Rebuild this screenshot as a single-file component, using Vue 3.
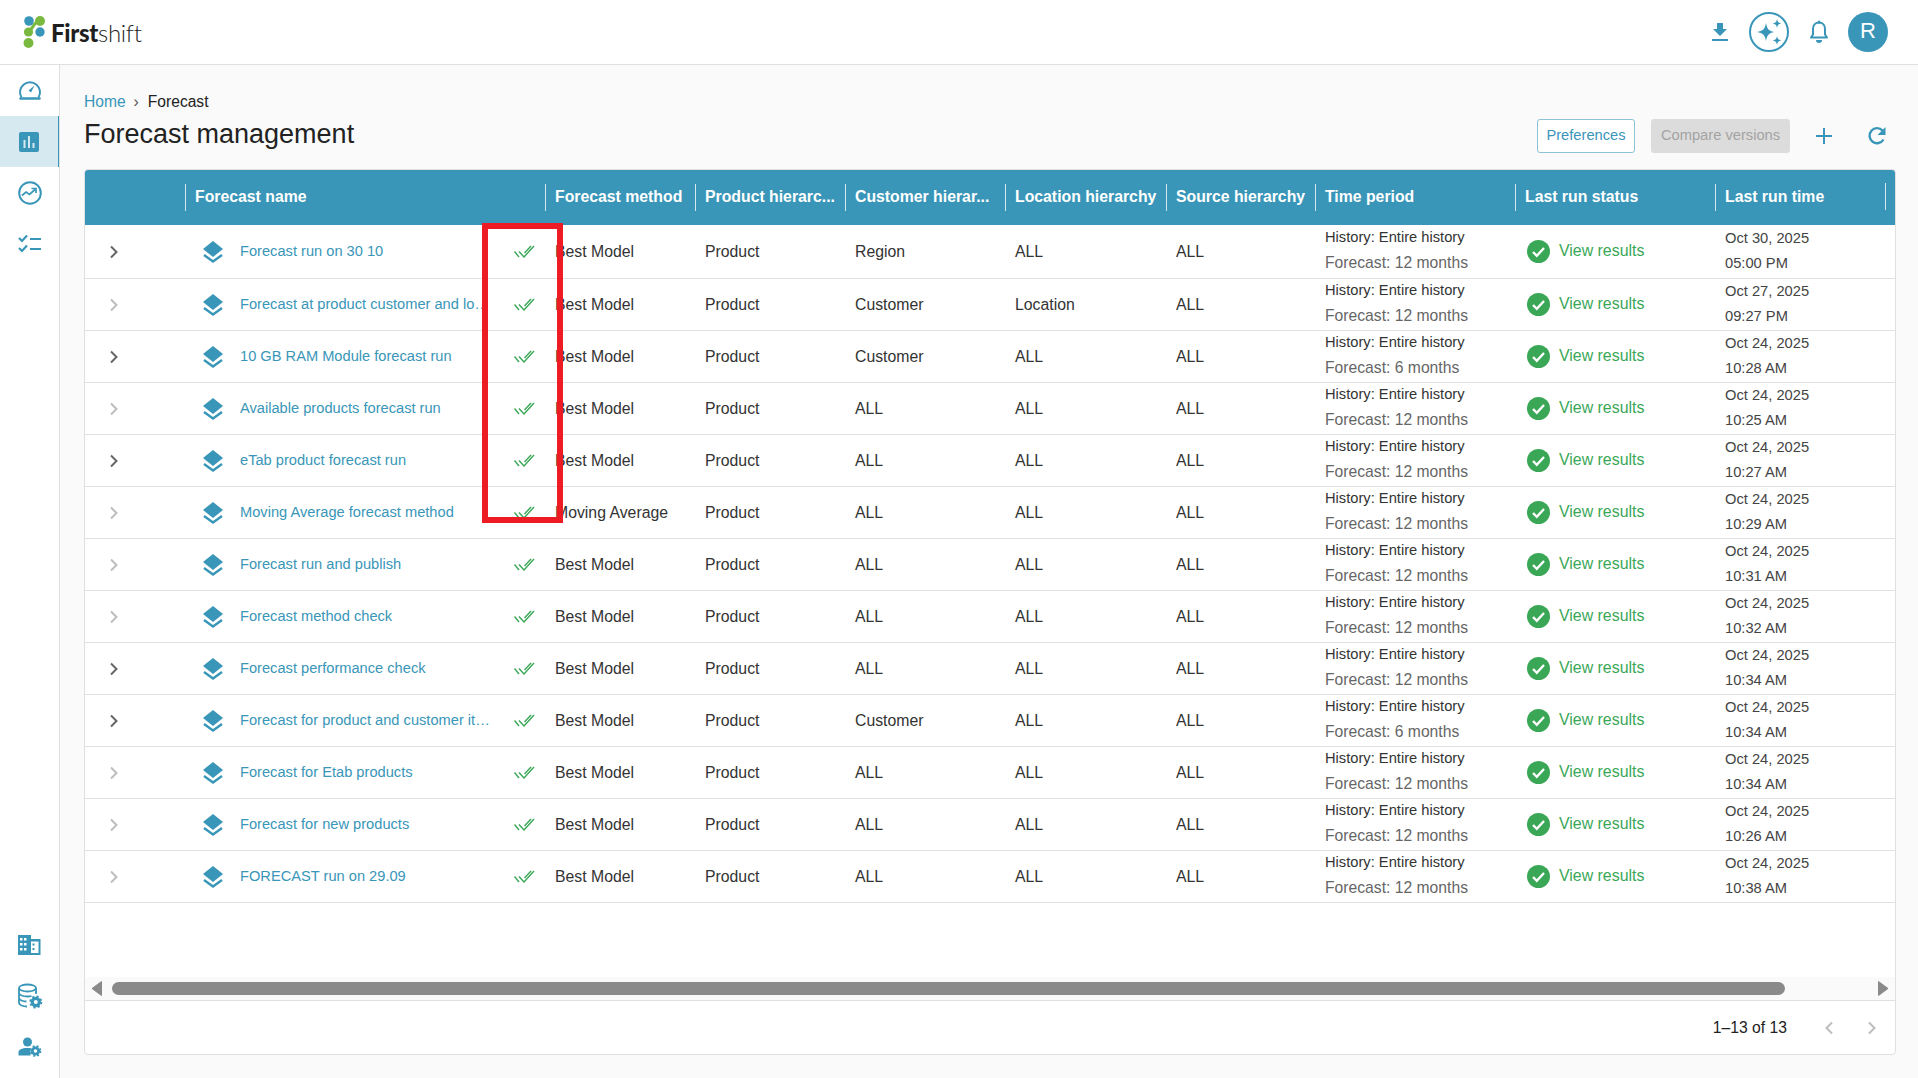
<script setup>
const columns = ['', 'Forecast name', 'Forecast method', 'Product hierarc...', 'Customer hierar...', 'Location hierarchy', 'Source hierarchy', 'Time period', 'Last run status', 'Last run time']
const rows = [
  ['Forecast run on 30 10', 'Best Model', 'Product', 'Region', 'ALL', 'ALL', '12 months', 'Oct 30, 2025', '05:00 PM', true],
  ['Forecast at product customer and location level', 'Best Model', 'Product', 'Customer', 'Location', 'ALL', '12 months', 'Oct 27, 2025', '09:27 PM', false],
  ['10 GB RAM Module forecast run', 'Best Model', 'Product', 'Customer', 'ALL', 'ALL', '6 months', 'Oct 24, 2025', '10:28 AM', true],
  ['Available products forecast run', 'Best Model', 'Product', 'ALL', 'ALL', 'ALL', '12 months', 'Oct 24, 2025', '10:25 AM', false],
  ['eTab product forecast run', 'Best Model', 'Product', 'ALL', 'ALL', 'ALL', '12 months', 'Oct 24, 2025', '10:27 AM', true],
  ['Moving Average forecast method', 'Moving Average', 'Product', 'ALL', 'ALL', 'ALL', '12 months', 'Oct 24, 2025', '10:29 AM', false],
  ['Forecast run and publish', 'Best Model', 'Product', 'ALL', 'ALL', 'ALL', '12 months', 'Oct 24, 2025', '10:31 AM', false],
  ['Forecast method check', 'Best Model', 'Product', 'ALL', 'ALL', 'ALL', '12 months', 'Oct 24, 2025', '10:32 AM', false],
  ['Forecast performance check', 'Best Model', 'Product', 'ALL', 'ALL', 'ALL', '12 months', 'Oct 24, 2025', '10:34 AM', true],
  ['Forecast for product and customer items', 'Best Model', 'Product', 'Customer', 'ALL', 'ALL', '6 months', 'Oct 24, 2025', '10:34 AM', true],
  ['Forecast for Etab products', 'Best Model', 'Product', 'ALL', 'ALL', 'ALL', '12 months', 'Oct 24, 2025', '10:34 AM', false],
  ['Forecast for new products', 'Best Model', 'Product', 'ALL', 'ALL', 'ALL', '12 months', 'Oct 24, 2025', '10:26 AM', false],
  ['FORECAST run on 29.09', 'Best Model', 'Product', 'ALL', 'ALL', 'ALL', '12 months', 'Oct 24, 2025', '10:38 AM', false],
]
</script>

<template>
  <div class="app">
    <header class="topbar">
      <div class="logo">
        <svg width="24" height="34" viewBox="0 0 24 34" class="logo-mark">
          <path d="M5 16 C10 16 10 6 17 6" fill="none" stroke="#7ab940" stroke-width="3" />
          <circle cx="6" cy="6" r="4.8" fill="#3996b8" />
          <circle cx="17" cy="6" r="5" fill="#7ab940" />
          <circle cx="17" cy="17" r="4.7" fill="#3996b8" />
          <circle cx="5.5" cy="17" r="4.6" fill="#7ab940" />
          <circle cx="5.5" cy="28" r="5" fill="#7ab940" />
        </svg>
        <span class="logo-text"><b>First</b>shift</span>
      </div>
      <div class="top-actions">
        <svg class="ic-download" width="18" height="20" viewBox="0 0 18 20">
          <path d="M6 1h6v6h4l-7 7-7-7h4z" fill="#3996b8" />
          <rect x="1" y="17" width="16" height="2" fill="#3996b8" />
        </svg>
        <div class="spark">
          <svg width="30" height="30" viewBox="0 0 30 30">
            <path d="M12 6 C13 12 15 14 20 15 C15 16 13 18 12 24 C11 18 9 16 3 15 C9 14 11 12 12 6Z" fill="#3996b8" />
            <path d="M23 2 C23.5 5 24.5 6 27.5 6.500 C24.500 7 23.500 8 23 11 C22.500 8 21.500 7 18.500 6.500 C21.500 6 22.500 5 23 2Z" fill="#3996b8" />
            <path d="M23 19 C23.5 22 24.5 23 27.500 23.500 C24.500 24 23.500 25 23 28 C22.500 25 21.500 24 18.500 23.500 C21.500 23 22.500 22 23 19Z" fill="#3996b8" />
          </svg>
        </div>
        <svg class="ic-bell" width="20" height="24" viewBox="0 0 20 24">
          <path d="M10 2.500c-3.800 0-6 3-6 6.500v5.500L2 17.500h16l-2-3V9c0-3.500-2.200-6.500-6-6.500z" fill="none" stroke="#3996b8" stroke-width="2" stroke-linejoin="round" />
          <rect x="8.500" y="0.500" width="3" height="3" rx="1.500" fill="#3996b8" />
          <path d="M7 20h6a3 3 0 0 1-6 0z" fill="#3996b8" />
        </svg>
        <div class="avatar">R</div>
      </div>
    </header>

    <div class="body">
      <aside class="sidebar">
        <div class="nav-group">
          <div class="nav-item">
            <svg width="24" height="22" viewBox="0 0 24 22">
              <path d="M3.500 18.500A10 10 0 1 1 20.500 18.500" fill="none" stroke="#3996b8" stroke-width="2" transform="translate(0 -1)" />
              <path d="M2.500 19.500h19" stroke="#3996b8" stroke-width="2.500" stroke-linecap="round" transform="translate(0 -1)" />
              <path d="M10.500 10.500l6-5-3.500 7z" fill="#3996b8" />
            </svg>
          </div>
          <div class="nav-item active">
            <svg width="20" height="20" viewBox="0 0 20 20">
              <rect width="20" height="20" rx="2" fill="#3996b8" />
              <rect x="4.500" y="8" width="2" height="8" fill="#d7e9f0" />
              <rect x="9" y="4" width="2" height="12" fill="#d7e9f0" />
              <rect x="13.500" y="11" width="2" height="5" fill="#d7e9f0" />
            </svg>
          </div>
          <div class="nav-item">
            <svg width="24" height="24" viewBox="0 0 24 24" fill="none" stroke="#3996b8">
              <circle cx="12" cy="12" r="10.800" stroke-width="2" />
              <path d="M4 14.500l4-3.500 3.500 2.500L17 8.500" stroke-width="1.700" />
              <path d="M13.500 7.500h4.500v4.500" stroke-width="1.700" />
            </svg>
          </div>
          <div class="nav-item">
            <svg width="24" height="20" viewBox="0 0 24 20" fill="none" stroke="#3996b8" stroke-width="2.200">
              <path d="M1 4l3 3 5-5.500" />
              <path d="M1 14l3 3 5-5.500" />
              <path d="M12 5h11M12 15h11" />
            </svg>
          </div>
        </div>
        <div class="nav-group">
          <div class="nav-item">
            <svg width="24" height="22" viewBox="0 0 24 22" class="ic-building">
              <path d="M1 1h13v4h9.500v16H1z" fill="#3996b8" />
              <g fill="#fff">
                <rect x="3" y="4" width="2.500" height="2.500" /><rect x="7" y="4" width="2.500" height="2.500" />
                <rect x="3" y="9" width="2.500" height="2.500" /><rect x="7" y="9" width="2.500" height="2.500" />
                <rect x="3" y="14" width="2.500" height="2.500" /><rect x="7" y="14" width="2.500" height="2.500" />
                <rect x="14" y="7.500" width="7.500" height="11.500" />
              </g>
              <g fill="#3996b8">
                <rect x="15.500" y="9.500" width="2" height="2" /><rect x="15.500" y="14" width="2" height="2" />
              </g>
            </svg>
          </div>
          <div class="nav-item">
            <svg width="26" height="26" viewBox="0 0 26 26" fill="none" stroke="#3996b8" stroke-width="1.800">
              <ellipse cx="10.500" cy="5" rx="8.500" ry="3.500" />
              <path d="M2 5v15c0 2 4 3.500 8 3.500M19 5v6M2 10c0 2 4 3.500 8.500 3.500 2 0 3-.2 4-.5M2 15c0 2 4 3.500 7.500 3.500" />
              <circle cx="18.800" cy="19" r="3.600" stroke-width="3.200" />
              <circle cx="18.800" cy="19" r="5.600" stroke-width="1.800" stroke-dasharray="2.200 2.200" />
            </svg>
          </div>
          <div class="nav-item">
            <svg width="24" height="20" viewBox="0 0 24 20">
              <circle cx="9.500" cy="5" r="4.500" fill="#3996b8" />
              <path d="M0.500 18.500v-3c0-3 3-4.500 9-4.500 1.500 0 2.500.1 3 .3v7.200z" fill="#3996b8" />
              <circle cx="17.500" cy="14" r="3.200" fill="none" stroke="#3996b8" stroke-width="2.800" />
              <circle cx="17.500" cy="14" r="5" fill="none" stroke="#3996b8" stroke-width="1.600" stroke-dasharray="2 2" />
            </svg>
          </div>
        </div>
      </aside>

      <main class="main">
        <nav class="crumbs"><span class="crumb-link">Home</span><span class="crumb-sep">›</span><span>Forecast</span></nav>
        <div class="title-row">
          <h1>Forecast management</h1>
          <div class="page-actions">
            <button class="btn">Preferences</button>
            <button class="btn disabled">Compare versions</button>
            <svg class="ic-plus" width="16" height="16" viewBox="0 0 16 16"><path d="M8 0v16M0 8h16" stroke="#3996b8" stroke-width="2" /></svg>
            <svg class="ic-refresh" width="20" height="20" viewBox="0 0 20 20" fill="none">
              <path d="M16.500 13.500A7.500 7.500 0 1 1 15.500 4.500" stroke="#3996b8" stroke-width="2.400" />
              <path d="M18.500 1v8h-8z" fill="#3996b8" />
            </svg>
          </div>
        </div>

        <section class="card">
          <div class="grid head">
            <div v-for="(c, i) in columns" :key="i" class="hcell">{{ c }}</div>
            <i class="end-sep"></i>
          </div>
          <div class="rows">
            <div v-for="r in rows" :key="r[0]" class="grid row">
              <div class="c-exp">
                <svg width="10" height="14" viewBox="0 0 10 14"><path d="M2 1.500L7.500 7 2 12.500" fill="none" :stroke="r[9] ? '#666' : '#bdbdbd'" stroke-width="2" /></svg>
              </div>
              <div class="c-name">
                <svg class="ic-layer" width="20" height="22" viewBox="0 0 20 22">
                  <path d="M10 0L20 8 10 16 0 8z" fill="#3996b8" />
                  <path d="M1 14l9 6.500 9-6.500" fill="none" stroke="#3996b8" stroke-width="2.400" />
                </svg>
                <span class="name" :title="r[0]">{{ r[0] }}</span>
                <svg class="ic-check" width="22" height="13" viewBox="0 0 22 13" fill="none" stroke="#3aa757" stroke-width="1.400">
                  <path d="M0.500 6.500l4.500 5.500" />
                  <path d="M5 6.500l5 5.500L20 1" />
                  <path d="M10.500 8L17 1" />
                </svg>
              </div>
              <div class="c-text">{{ r[1] }}</div>
              <div class="c-text">{{ r[2] }}</div>
              <div class="c-text">{{ r[3] }}</div>
              <div class="c-text">{{ r[4] }}</div>
              <div class="c-text">{{ r[5] }}</div>
              <div class="c-two period">
                <span class="hist">History: Entire history</span>
                <span class="fc">Forecast: {{ r[6] }}</span>
              </div>
              <div class="c-status">
                <svg width="23" height="23" viewBox="0 0 23 23">
                  <circle cx="11.500" cy="11.500" r="11.500" fill="#3aa757" />
                  <path d="M6 12l3.800 3.800L17 8" fill="none" stroke="#fff" stroke-width="2.400" />
                </svg>
                <span class="view">View results</span>
              </div>
              <div class="c-two time">
                <span>{{ r[7] }}</span>
                <span>{{ r[8] }}</span>
              </div>
            </div>
          </div>
          <div class="hscroll">
            <svg class="arrow" width="11" height="15" viewBox="0 0 11 15"><path d="M10.500 0.500v14L1 7.500z" fill="#8a8a8a" stroke="#8a8a8a" stroke-linejoin="round" /></svg>
            <div class="thumb"></div>
            <svg class="arrow" width="11" height="15" viewBox="0 0 11 15"><path d="M0.500 0.500v14L10 7.500z" fill="#8a8a8a" stroke="#8a8a8a" stroke-linejoin="round" /></svg>
          </div>
          <footer class="pager">
            <span class="count">1–13 of 13</span>
            <svg width="10" height="14" viewBox="0 0 10 14"><path d="M8 1.500L2.500 7 8 12.500" fill="none" stroke="#bdbdbd" stroke-width="2" /></svg>
            <svg width="10" height="14" viewBox="0 0 10 14"><path d="M2 1.500L7.500 7 2 12.500" fill="none" stroke="#bdbdbd" stroke-width="2" /></svg>
          </footer>
        </section>
      </main>
    </div>
    <div class="callout"></div>
  </div>
</template>

<style scoped>
.app {
  position: relative;
  display: flex;
  flex-direction: column;
  width: 1918px;
  height: 1078px;
  overflow: hidden;
  font-family: "Liberation Sans", Arial, sans-serif;
  color: #222;
  background: #fafafa;
}
.topbar {
  flex: none;
  height: 65px;
  box-sizing: border-box;
  display: flex;
  align-items: center;
  justify-content: space-between;
  background: #fff;
  border-bottom: 1px solid #e0e0e0;
  padding: 0 30px 1px 23px;
}
.logo { display: flex; align-items: center; gap: 4px; }
.logo-text {
  font-family: Lato, "Liberation Sans", sans-serif;
  font-size: 24px;
  font-weight: 300;
  letter-spacing: -0.3px;
  color: #1e1e1e;
  margin-top: 2px;
}
.logo-text b { font-weight: 900; }
.top-actions { display: flex; align-items: center; }
.ic-download { margin-right: 20px; }
.spark {
  width: 40px;
  height: 40px;
  box-sizing: border-box;
  border: 2px solid #3996b8;
  border-radius: 50%;
  display: flex;
  align-items: center;
  justify-content: center;
  margin-right: 20px;
}
.ic-bell { margin-right: 19px; }
.avatar {
  width: 40px;
  height: 40px;
  border-radius: 50%;
  background: #3996b8;
  color: #fff;
  font-size: 22px;
  line-height: 38px;
  text-align: center;
}
.body { flex: 1; display: flex; min-height: 0; }
.sidebar {
  flex: none;
  width: 60px;
  box-sizing: border-box;
  background: #fff;
  border-right: 1px solid #e0e0e0;
  display: flex;
  flex-direction: column;
  justify-content: space-between;
  padding-bottom: 6px;
}
.nav-item {
  height: 51px;
  display: flex;
  align-items: center;
  justify-content: center;
  box-sizing: border-box;
}
.nav-item.active {
  background: #d7e9f0;
  border-right: 1px solid #3996b8;
}
.ic-building { margin-right: 1px; }
.main {
  flex: 1;
  min-width: 0;
  box-sizing: border-box;
  padding: 28px 22px 23px 24px;
  display: flex;
  flex-direction: column;
}
.crumbs {
  display: flex;
  align-items: center;
  height: 18px;
  font-size: 15.6px;
}
.crumb-link { color: #3996b8; }
.crumb-sep { margin: 0 9px 0 8px; color: #555; }
.title-row {
  display: flex;
  align-items: center;
  justify-content: space-between;
  height: 43px;
  margin-top: 3px;
}
h1 {
  margin: 0;
  padding-bottom: 3px;
  font-size: 27px;
  font-weight: 400;
  color: #222;
}
.page-actions { display: flex; align-items: center; }
.btn {
  height: 34px;
  box-sizing: border-box;
  font: 14.7px "Liberation Sans", Arial, sans-serif;
  color: #3996b8;
  background: #fff;
  border: 1px solid #8cc3d8;
  border-radius: 3px;
  padding: 0 0 2px;
  width: 98px;
  margin-right: 16px;
}
.btn.disabled {
  width: 139px;
  color: #a3a3a3;
  background: #dcdcdc;
  border-color: #dcdcdc;
  margin-right: 26px;
}
.ic-plus { margin-right: 35px; }
.ic-refresh { margin-right: 9px; }
.card {
  flex: 1;
  margin-top: 12px;
  min-height: 0;
  background: #fff;
  border: 1px solid #e0e0e0;
  border-radius: 4px;
  display: flex;
  flex-direction: column;
  overflow: hidden;
}
.grid {
  display: grid;
  grid-template-columns: 101px 360px 150px 150px 160px 161px 149px 200px 200px 180px;
}
.head {
  position: relative;
  height: 56px;
  flex: none;
  background: #3996b8;
  margin: -1px -1px 0;
  align-items: center;
}
.hcell {
  height: 27px;
  line-height: 25px;
  border-left: 1px solid #d5e8ef;
  padding-left: 9px;
  color: #fff;
  font-weight: 700;
  font-size: 15.8px;
  white-space: nowrap;
}
.hcell:first-child { border-left: 0; }
.end-sep {
  position: absolute;
  left: 1801px;
  top: 14px;
  height: 27px;
  width: 1px;
  background: #d5e8ef;
}
.rows { flex: 1; margin: 0 -1px; }
.row {
  height: 52px;
  box-sizing: border-box;
  border-bottom: 1px solid #e0e0e0;
  align-items: center;
  font-size: 15.8px;
}
.row:first-child { height: 54px; }
.c-exp { padding-left: 25px; display: flex; }
.c-name { display: flex; align-items: center; padding-left: 18px; }
.ic-layer { flex: none; margin-right: 17px; }
.name {
  width: 253px;
  flex: none;
  overflow: hidden;
  text-overflow: ellipsis;
  white-space: nowrap;
  color: #3996b8;
  font-size: 14.65px;
  margin-top: -1px;
}
.ic-check { flex: none; margin-left: 21px; }
.c-text { padding-left: 10px; color: #333; white-space: nowrap; }
.c-two {
  padding-left: 10px;
  display: flex;
  flex-direction: column;
  line-height: 25px;
  font-size: 14.7px;
}
.period { margin-top: -4px; }
.hist { color: #333; }
.fc { color: #666; font-size: 15.7px; }
.time { color: #444; margin-top: -2px; }
.c-status { display: flex; align-items: center; gap: 9px; padding-left: 12px; }
.view { color: #3aa757; font-size: 15.9px; margin-top: -1px; }
.hscroll {
  flex: none;
  height: 23px;
  background: #fafafa;
  display: flex;
  align-items: center;
  padding: 0 6px;
  margin-top: -1px;
}
.thumb {
  width: 1673px;
  height: 13px;
  margin: 0 auto 0 10px;
  border-radius: 7px;
  background: #8a8a8a;
}
.pager {
  flex: none;
  height: 54px;
  box-sizing: border-box;
  border-top: 1px solid #e0e0e0;
  display: flex;
  align-items: center;
  justify-content: flex-end;
  padding-right: 18px;
  gap: 33px;
}
.count { font-size: 15.7px; color: #222; margin-right: 4px; }
.callout {
  position: absolute;
  left: 482px;
  top: 223px;
  width: 81px;
  height: 300px;
  box-sizing: border-box;
  border: 6px solid #ed1c24;
  pointer-events: none;
}
</style>

<style>
html, body { margin: 0; padding: 0; background: #fafafa; }
</style>
